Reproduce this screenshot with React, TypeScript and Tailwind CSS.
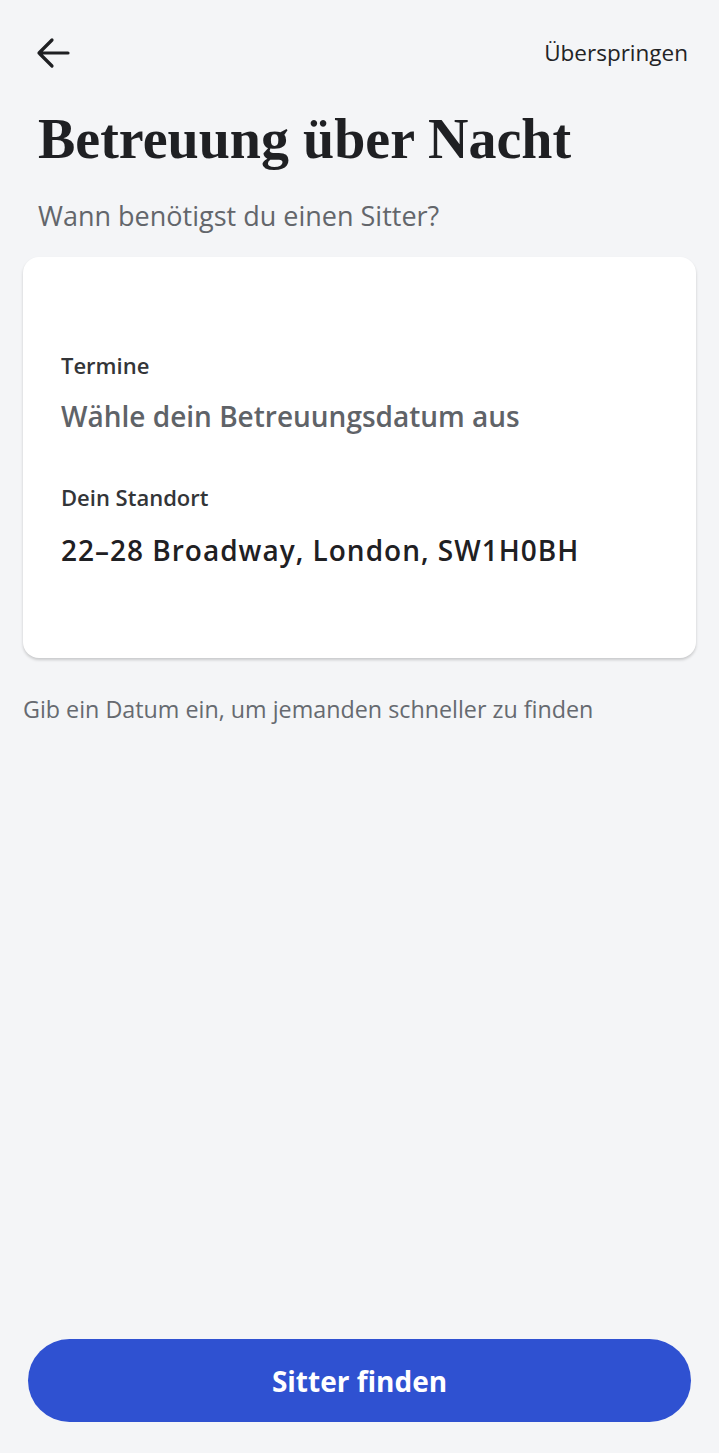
import React from "react";

export default function App() {
  return (
    <div
      className="min-h-screen bg-[#f4f5f7] flex flex-col"
      style={{ fontFamily: "'Open Sans', Lato, sans-serif" }}
    >
      <div className="flex items-center justify-between pt-[25px] pl-[36px] pr-[31px] h-[81px]">
        <svg width="34" height="34" viewBox="0 0 34 34" fill="none">
          <path
            d="M3 17H32M16 4L3 17L16 30"
            stroke="#1f2023"
            strokeWidth="3.2"
            strokeLinecap="round"
            strokeLinejoin="round"
          />
        </svg>
        <span className="text-[22.5px] leading-[28px] text-[#222326]">Überspringen</span>
      </div>

      <h1
        className="mt-[28px] px-[38px] text-[56px] leading-[60px] font-bold text-[#1f2023]"
        style={{ fontFamily: "'Liberation Serif', serif" }}
      >
        Betreuung über Nacht
      </h1>

      <p className="mt-[31px] px-[38px] text-[27px] leading-[32px] text-[#63666b]">
        Wann benötigst du einen Sitter?
      </p>

      <div className="mt-[25px] mx-[23px] bg-white rounded-[16px] shadow-[0_2px_3px_rgba(0,0,0,0.18)] pt-[94px] pb-[90px] px-[38px]">
        <div className="text-[22px] leading-[28px] font-semibold text-[#333538]">Termine</div>
        <div className="mt-[19px] text-[28px] leading-[36px] font-semibold text-[#5f6368]">
          Wähle dein Betreuungsdatum aus
        </div>
        <div className="mt-[49px] text-[22px] leading-[28px] font-semibold text-[#333538]">Dein Standort</div>
        <div className="mt-[21px] text-[28px] leading-[36px] font-semibold tracking-[1px] text-[#1f2023]">
          22–28 Broadway, London, SW1H0BH
        </div>
      </div>

      <p className="mt-[37px] px-[23px] text-[23.3px] leading-[28px] text-[#666a70]">
        Gib ein Datum ein, um jemanden schneller zu finden
      </p>

      <div className="flex-1" />

      <div className="px-[28px] pb-[31px]">
        <button className="w-full h-[83px] rounded-full bg-[#2f51d1] text-white text-[28px] font-bold">
          Sitter finden
        </button>
      </div>
    </div>
  );
}
